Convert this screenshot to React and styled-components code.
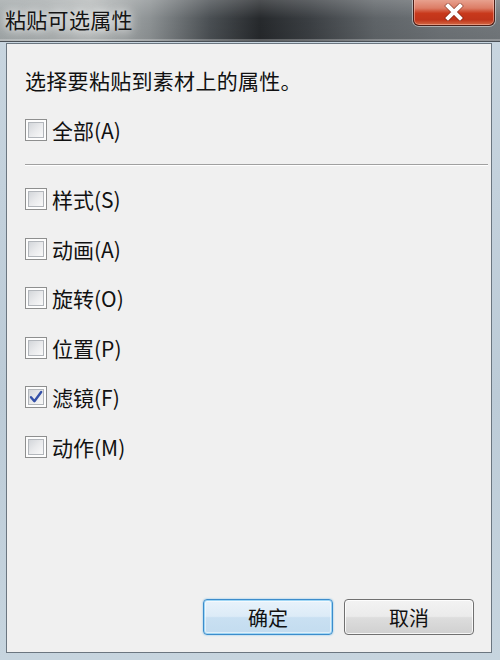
import React from "react";
import styled, { createGlobalStyle } from "styled-components";

const Global = createGlobalStyle`
  html, body { margin: 0; padding: 0; }
  body { width: 500px; height: 660px; overflow: hidden; background: #b8c6d2; }
  * { box-sizing: border-box; }
`;

const Frame = styled.div`
  width: 500px;
  height: 660px;
  display: flex;
  flex-direction: column;
  background: linear-gradient(180deg, #c9d6e0 0%, #bccbd7 60%, #c7d5df 100%);
  font-family: "Noto Sans CJK SC", "Microsoft YaHei", sans-serif;
`;

const TitleBar = styled.div`
  height: 42px;
  flex: none;
  display: flex;
  justify-content: space-between;
  align-items: flex-start;
  background:
    linear-gradient(180deg, rgba(255,255,255,0.18) 0%, rgba(255,255,255,0) 45%, rgba(0,0,0,0.05) 100%),
    linear-gradient(90deg, #a3a9aa 0%, #a8adae 8%, #b7bbbb 18%, #8d9294 30%, #4a4f53 42%, #26292c 52%, #3b3f43 62%, #5f6468 75%, #6d7276 88%, #73787c 100%);
  border-bottom: 1px solid #4a5056;
  box-shadow: inset 0 -2px 0 rgba(255,255,255,0.25);
`;

const Title = styled.div`
  padding: 6px 0 0 5px;
  font-size: 21px;
  line-height: 26px;
  color: #141414;
  text-shadow: 0 0 8px rgba(255,255,255,0.9), 0 0 14px rgba(255,255,255,0.7);
  letter-spacing: 0.3px;
`;

const CloseButton = styled.div`
  width: 82px;
  height: 27px;
  margin-right: 5px;
  margin-top: -1px;
  border: 1px solid #4a1f18;
  border-top: none;
  border-radius: 0 0 6px 6px;
  background: linear-gradient(180deg, #e9a593 0%, #dc7d66 35%, #c8391c 55%, #c0341a 80%, #d46a45 100%);
  box-shadow: 0 0 0 1px rgba(255,255,255,0.45), inset 0 0 0 1px rgba(255,210,200,0.45);
  display: flex;
  align-items: center;
  justify-content: center;
`;

const Client = styled.div`
  flex: 1;
  margin: 1px 8px 7px 6px;
  background: #f0f0f0;
  border: 1px solid #6b7680;
  display: flex;
  flex-direction: column;
  padding: 24px 17px 17px 18px;
`;

const Intro = styled.div`
  font-size: 21px;
  line-height: 24px;
  letter-spacing: 0.3px;
  color: #111;
`;

const Row = styled.label`
  display: flex;
  align-items: center;
  gap: 5px;
  height: 24px;
  margin-top: ${(p) => p.$mt}px;
  font-size: 21px;
  line-height: 24px;
  color: #111;
`;

const Box = styled.span`
  width: 22px;
  height: 22px;
  flex: none;
  border: 1px solid #8e8f8f;
  background: #fdfdfd;
  padding: 2px;
  display: flex;
`;

const BoxInner = styled.span`
  flex: 1;
  border: 1px solid #b2b6bb;
  background: linear-gradient(135deg, #d3d6da 0%, #e9eaec 50%, #f9f9f9 100%);
  display: flex;
  align-items: center;
  justify-content: center;
`;

const Separator = styled.div`
  margin-top: 22px;
  height: 2px;
  border-top: 1px solid #a0a0a0;
  border-bottom: 1px solid #ffffff;
  margin-right: -14px;
`;

const Buttons = styled.div`
  margin-top: auto;
  display: flex;
  justify-content: flex-end;
  gap: 11px;
`;

const Button = styled.div`
  width: 130px;
  height: 36px;
  border-radius: 4px;
  display: flex;
  align-items: center;
  justify-content: center;
  font-size: 20px;
  color: #111;
  border: 1px solid ${(p) => (p.$default ? "#3c8ccb" : "#707070")};
  background: ${(p) =>
    p.$default
      ? "linear-gradient(180deg, #e9f3fb 0%, #dcebf7 48%, #c9e0f2 52%, #c3dcef 100%)"
      : "linear-gradient(180deg, #f3f3f3 0%, #ebebeb 48%, #dddddd 52%, #d0d0d0 100%)"};
  box-shadow: ${(p) =>
    p.$default
      ? "inset 0 0 0 1px #9fd6f5, inset 0 0 0 2px rgba(255,255,255,0.5), 0 0 2px #6fbbe8"
      : "inset 0 0 0 1px rgba(255,255,255,0.8)"};
`;

const items = [
  { label: "样式(S)", checked: false },
  { label: "动画(A)", checked: false },
  { label: "旋转(O)", checked: false },
  { label: "位置(P)", checked: false },
  { label: "滤镜(F)", checked: true },
  { label: "动作(M)", checked: false },
];

function Check({ checked }) {
  return (
    <Box>
      <BoxInner>
        {checked && (
          <svg width="14" height="14" viewBox="0 0 14 14">
            <path
              d="M2 7.2 L5.4 11.2 L12.2 2"
              fill="none"
              stroke="#3450a8"
              strokeWidth="2.4"
              strokeLinecap="round"
              strokeLinejoin="round"
            />
          </svg>
        )}
      </BoxInner>
    </Box>
  );
}

export default function App() {
  return (
    <>
      <Global />
      <Frame>
        <TitleBar>
          <Title>粘贴可选属性</Title>
          <CloseButton>
            <svg width="22" height="18" viewBox="0 0 22 18">
              <path
                d="M5 3 L17 15 M17 3 L5 15"
                stroke="#5a1a10"
                strokeWidth="5.5"
                strokeLinecap="square"
                opacity="0.5"
              />
              <path
                d="M5 3 L17 15 M17 3 L5 15"
                stroke="#ffffff"
                strokeWidth="4"
                strokeLinecap="square"
              />
            </svg>
          </CloseButton>
        </TitleBar>
        <Client>
          <Intro>选择要粘贴到素材上的属性。</Intro>
          <Row $mt={26}>
            <Check checked={false} />
            全部(A)
          </Row>
          <Separator />
          {items.map((it, i) => (
            <Row key={it.label} $mt={i === 0 ? 21 : 25.5}>
              <Check checked={it.checked} />
              {it.label}
            </Row>
          ))}
          <Buttons>
            <Button $default>确定</Button>
            <Button>取消</Button>
          </Buttons>
        </Client>
      </Frame>
    </>
  );
}
